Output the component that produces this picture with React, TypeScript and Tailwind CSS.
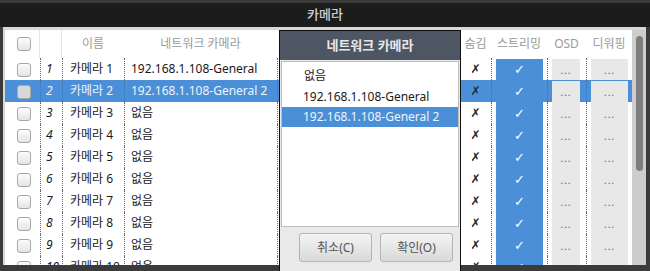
import React from "react";

const rows = Array.from({ length: 10 }, (_, i) => ({
  n: i + 1,
  name: `카메라 ${i + 1}`,
  net: i === 0 ? "192.168.1.108-General" : i === 1 ? "192.168.1.108-General 2" : "없음",
}));

const cols = "grid grid-cols-[35px_22px_62px_153px_183px_31px_56px_39px_46px]";
const dot = "border-l border-dotted border-[#6a6a6a]";

function Checkbox({ sel }: { sel?: boolean }) {
  return (
    <div
      className={`ml-[12px] w-[14px] h-[14px] rounded-[3px] border border-[#a8a8a8] ${
        sel ? "bg-[#d8d8d8]" : "bg-gradient-to-b from-[#fdfdfd] to-[#e4e4e4]"
      }`}
    />
  );
}

export default function App() {
  return (
    <div className="w-[650px] h-[271px] bg-[#3b3b3b] flex flex-col overflow-hidden font-['Noto_Sans','Noto_Sans_CJK_KR',sans-serif] text-[12px]">
      <div className="h-[3px] bg-[#3b3b3b]" />
      <div className="h-[24px] bg-[#1c1c1c] flex items-center justify-center text-[#cfcfcf] font-medium text-[13px]">
        카메라
      </div>
      <div className="relative flex-1 flex pl-[3px] pr-[4px] min-h-0">
        <div className="flex-1 flex flex-col bg-[#d8d8d8] pl-[2px] pt-[3px] min-h-0">
          <div className="flex-1 flex min-h-0">
            <div className="w-[627px] bg-white flex flex-col overflow-hidden">
              <div className={`${cols} h-[28px] items-center text-[#9a9a9a] shrink-0`}>
                <div className="h-full flex items-center border-r border-[#e4e4e4]">
                  <Checkbox />
                </div>
                <div className="h-full border-r border-[#e4e4e4]" />
                <div className="text-center">이름</div>
                <div className="text-center">네트워크 카메라</div>
                <div />
                <div className="text-center">숨김</div>
                <div className="text-center">스트리밍</div>
                <div className="text-center">OSD</div>
                <div className="text-center">디워핑</div>
              </div>
              {rows.map((r) => {
                const sel = r.n === 2;
                return (
                  <div
                    key={r.n}
                    className={`${cols} h-[22px] shrink-0 leading-[22px] ${
                      sel ? "bg-[#4a8fd8] text-[#eef4fb]" : "text-[#1a1a1a]"
                    }`}
                  >
                    <div className="flex items-center">
                      <Checkbox sel={sel} />
                    </div>
                    <div className={`${dot} italic pl-[5px]`}>{r.n}</div>
                    <div className={`${dot} pl-[7px] whitespace-nowrap`}>{r.name}</div>
                    <div className={`${dot} pl-[6px] whitespace-nowrap`}>{r.net}</div>
                    <div className={dot} />
                    <div className={`text-center font-['DejaVu_Sans',sans-serif] text-[12px] ${sel ? "text-[#1a2a40]" : "text-[#222]"}`}>
                      ✗
                    </div>
                    <div className={`${dot} py-[1px] px-[4px]`}>
                      <div className="h-full bg-[#4a8fd8] flex items-center justify-center text-white text-[13px] font-['DejaVu_Sans',sans-serif]">
                        ✓
                      </div>
                    </div>
                    <div className={`${dot} py-[1px] pl-[4px] pr-[6px]`}>
                      <div className="h-full bg-[#e8e8e8] flex items-center justify-center text-[#666] text-[10px] tracking-[1px]">
                        ...
                      </div>
                    </div>
                    <div className={`${dot} py-[1px] pl-[4px] pr-[4px]`}>
                      <div className="h-full bg-[#e8e8e8] flex items-center justify-center text-[#666] text-[10px] tracking-[1px]">
                        ...
                      </div>
                    </div>
                  </div>
                );
              })}
            </div>
            <div className="w-[14px] bg-[#cdcdcd] pt-[6px] flex justify-center">
              <div className="w-[7px] h-[135px] rounded-full bg-[#7e7e7e]" />
            </div>
          </div>
        </div>

        <div className="absolute left-[279px] top-[3px] w-[182px] h-[250px] border border-[#111] bg-[#e9e9e9] flex flex-col">
          <div className="h-[29px] bg-[#4e5563] flex items-center justify-center text-[#e8e8e8] font-bold text-[13px] shrink-0">
            네트워크 카메라
          </div>
          <div className="px-[1px] pt-[1px]">
            <div className="h-[166px] bg-white border border-[#bdbdbd] pt-[4px] text-[#1a1a1a]">
              <div className="h-[20px] leading-[20px] pl-[22px]">없음</div>
              <div className="h-[21px] leading-[21px] pl-[21px]">192.168.1.108-General</div>
              <div className="h-[20px] leading-[20px] pl-[21px] bg-[#4a8fd8] text-[#eef4fb]">
                192.168.1.108-General 2
              </div>
            </div>
          </div>
          <div className="flex gap-[8px] pl-[19px] pt-[6px]">
            <button className="w-[73px] h-[29px] rounded-[3px] border border-[#b4b4b4] bg-gradient-to-b from-[#f4f4f4] to-[#d9d9d9] text-[#555] text-[12px]">
              취소(C)
            </button>
            <button className="w-[73px] h-[29px] rounded-[3px] border border-[#b4b4b4] bg-gradient-to-b from-[#f4f4f4] to-[#d9d9d9] text-[#555] text-[12px]">
              확인(O)
            </button>
          </div>
        </div>
      </div>
      <div className="h-[6px] bg-[#3b3b3b] shrink-0" />
    </div>
  );
}
